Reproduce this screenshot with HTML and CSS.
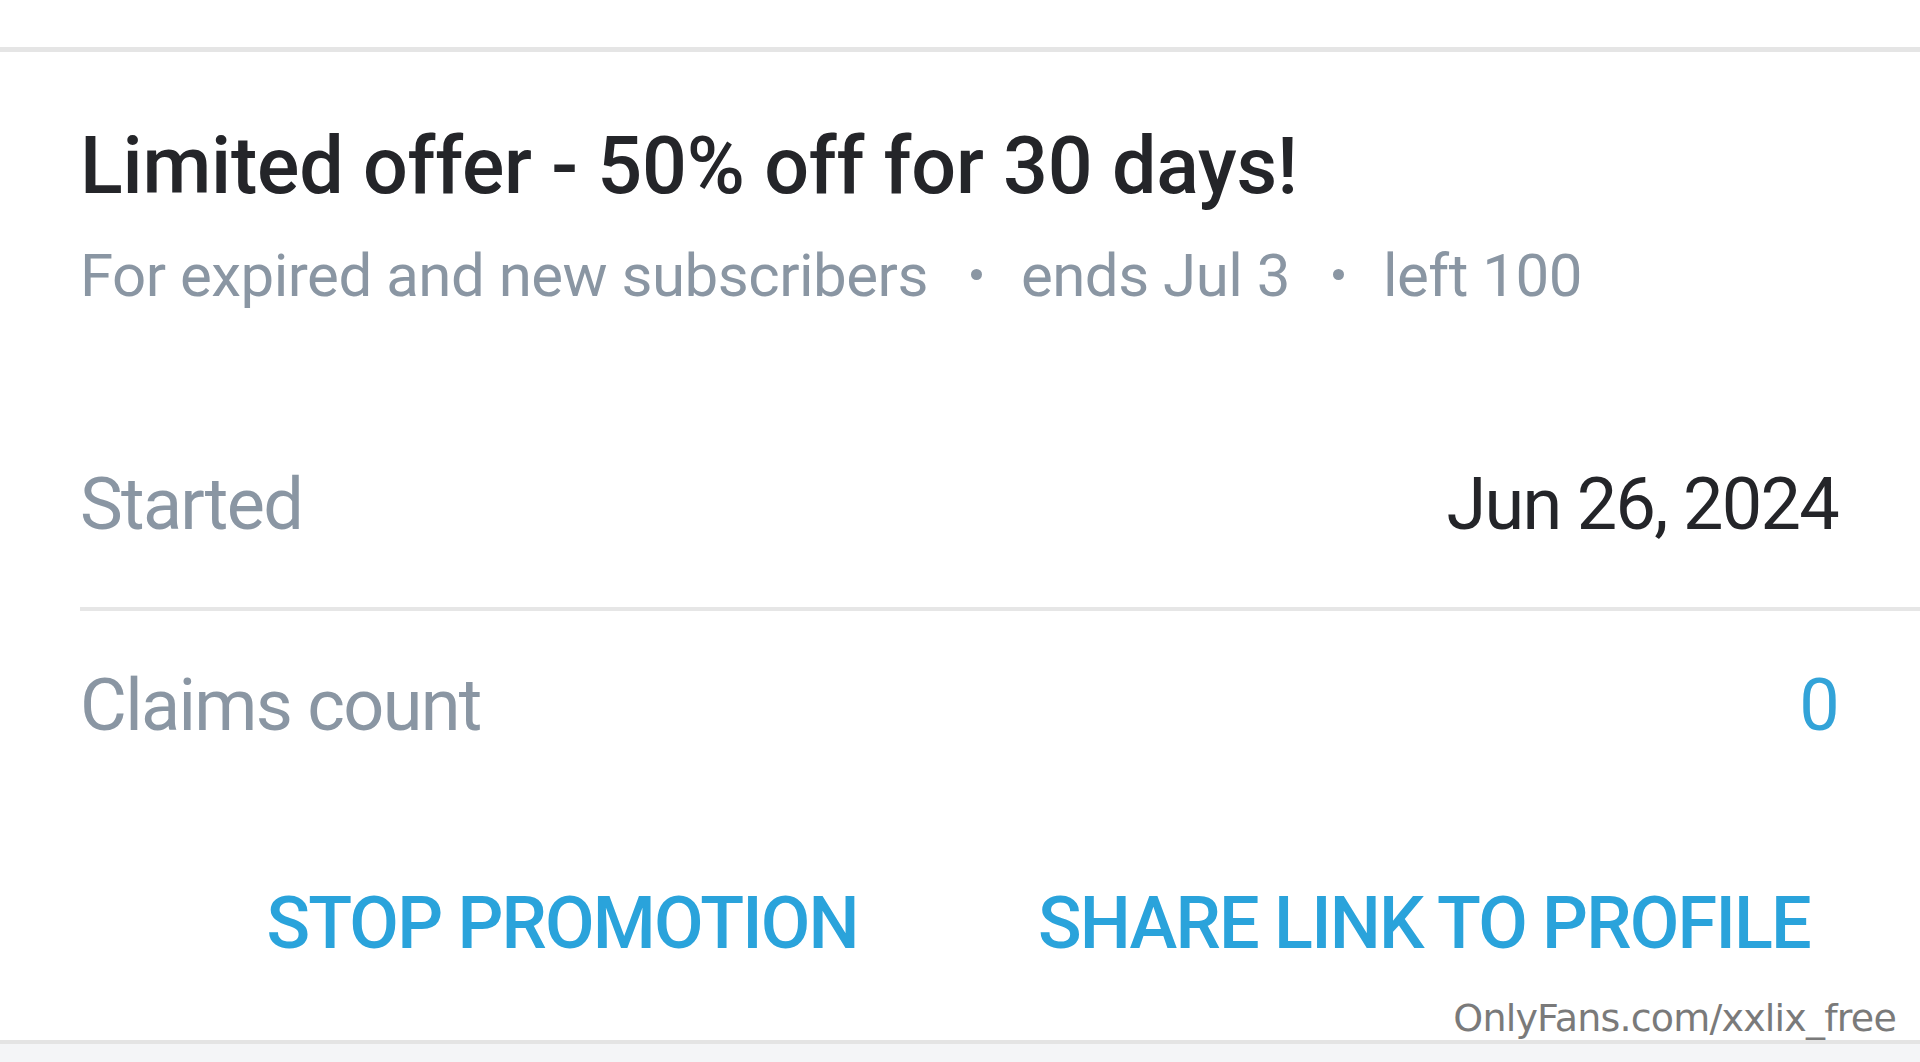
FILE: index.html
```html
<!DOCTYPE html>
<html lang="en">
<head>
<meta charset="utf-8">
<title>Promotion</title>
<link rel="stylesheet" href="styles.css">
</head>
<body>
<div class="page">
  <div class="topbar"></div>
  <section class="card">
    <h1 class="title">Limited offer - 50% off for 30 days!</h1>
    <p class="subtitle">For expired and new subscribers<span class="dot"></span>ends Jul 3<span class="dot"></span>left 100</p>
    <div class="row row-first">
      <span class="label">Started</span>
      <span class="value">Jun 26, 2024</span>
    </div>
    <div class="row row-last">
      <span class="label">Claims count</span>
      <span class="value value-blue">0</span>
    </div>
    <div class="actions">
      <button class="btn">STOP PROMOTION</button>
      <button class="btn">SHARE LINK TO PROFILE</button>
    </div>
    <div class="watermark">OnlyFans.com/xxlix_free</div>
  </section>
  <div class="bottom"></div>
</div>
</body>
</html>
```
FILE: styles.css
```css
html, body {
  margin: 0;
  padding: 0;
  background: #ffffff;
}
body {
  font-family: Roboto, "Liberation Sans", sans-serif;
  overflow: hidden;
}
.page {
  width: 1920px;
  height: 1062px;
  display: flex;
  flex-direction: column;
}
.topbar {
  height: 47px;
  border-bottom: 5px solid #e5e5e5;
  flex: none;
}
.card {
  position: relative;
  flex: none;
  height: 988px;
  padding: 0 82px 0 80px;
  box-sizing: border-box;
}
.title {
  margin: 75px 0 0 0;
  font-size: 79px;
  line-height: 79px;
  font-weight: 500;
  letter-spacing: -0.2px;
  color: #242529;
  white-space: nowrap;
}
.subtitle {
  margin: 40px 0 0 0;
  font-size: 60px;
  line-height: 60px;
  letter-spacing: -0.5px;
  color: #8a96a3;
  white-space: nowrap;
}
.dot {
  display: inline-block;
  width: 11px;
  height: 11px;
  border-radius: 50%;
  background: #8a96a3;
  vertical-align: 16px;
  margin: 0 39px 0 43px;
}
.row {
  display: flex;
  justify-content: space-between;
  align-items: baseline;
  font-size: 72px;
  line-height: 72px;
  letter-spacing: -1.7px;
}
.row-first {
  margin-top: 163px;
  margin-right: -82px;
  padding-right: 82px;
  padding-bottom: 66px;
  border-bottom: 4px solid #e6e6e6;
}
.row-last {
  padding-top: 59px;
}
.label {
  color: #8a96a3;
}
.value {
  color: #242529;
}
.value-blue {
  color: #33a3d8;
}
.actions {
  display: flex;
  justify-content: flex-end;
  gap: 180px;
  margin-top: 146px;
  padding-right: 28px;
}
.btn {
  border: 0;
  background: none;
  padding: 0;
  font-family: Roboto, "Liberation Sans", sans-serif;
  font-size: 72px;
  line-height: 72px;
  font-weight: 500;
  letter-spacing: -1.8px;
  color: #2aa3db;
}
.watermark {
  position: absolute;
  right: 24px;
  bottom: 3px;
  font-family: "DejaVu Sans", sans-serif;
  font-size: 38px;
  line-height: 38px;
  letter-spacing: -0.8px;
  color: #7a7a7a;
}
.bottom {
  flex: 1;
  background: #f4f5f7;
  border-top: 4px solid #e4e4e4;
}
```
